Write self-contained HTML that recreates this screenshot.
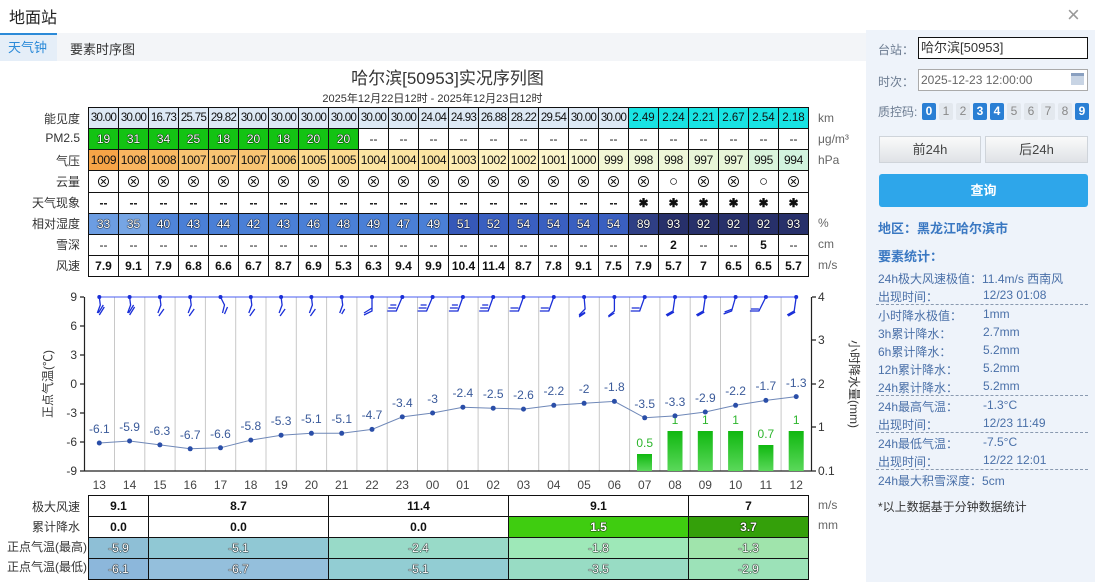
<!DOCTYPE html>
<html><head><meta charset="utf-8"><style>
*{margin:0;padding:0;box-sizing:border-box}
body{width:1095px;height:582px;background:#fff;font-family:"Liberation Sans","Noto Sans CJK SC",sans-serif;position:relative;overflow:hidden;color:#333}
.a{position:absolute;white-space:nowrap}
table{border-collapse:collapse;table-layout:fixed;position:absolute}
td{border:1.5px solid #111;text-align:center;font-size:12px;height:21px;padding:0;overflow:hidden;white-space:nowrap;color:#111}
.vis td{font-size:11.5px;letter-spacing:-0.7px}
.w{color:#fff;text-shadow:0 0 1px #000,0 0 1px #000,0 0 1px #000}
.lbl{position:absolute;right:1015px;font-size:12px;color:#333;text-align:right;white-space:nowrap}
.u{position:absolute;left:818px;font-size:12px;color:#666}
.rp{position:absolute;left:866px;top:30px;width:229px;height:552px;background:#eef3fa}
.st{position:absolute;left:878px;font-size:12px;color:#4a70a8;white-space:nowrap}
.st b{position:absolute;left:105px;top:0;font-weight:normal;white-space:nowrap}
.dash{position:absolute;left:876px;width:212px;border-top:1px dashed #8a9ab0}
.q{display:inline-block;width:14px;height:17px;line-height:17px;text-align:center;font-size:12px;margin-right:3px;border-radius:2px;background:#e3e8ee;color:#888}
.q.on{background:#2a7fd4;color:#fff;font-weight:bold}
.bt{position:absolute;top:136px;height:27px;border:1px solid #cfd4da;background:linear-gradient(#fafafa,#dfe2e6);font-size:13px;color:#444;text-align:center;line-height:25px}
</style></head><body>
<div class="a" style="left:9px;top:4px;font-size:16px;color:#222">地面站</div>
<div class="a" style="left:1067px;top:2px;font-size:22px;color:#999">×</div>
<div class="a" style="left:0;top:33px;width:866px;height:28px;background:#f3f5f8"></div>
<div class="a" style="left:0;top:33px;width:57px;height:28px;background:#e5eef8;border-top:2px solid #2b8ad8;color:#2b8ad8;font-size:13px;line-height:26px;padding-left:8px">天气钟</div>
<div class="a" style="left:70px;top:39px;font-size:13px;color:#333">要素时序图</div>

<div class="a" style="left:0;width:895px;top:64px;text-align:center;font-size:17px;color:#333">哈尔滨[50953]实况序列图</div>
<div class="a" style="left:0;width:865px;top:90px;text-align:center;font-size:11px;color:#333">2025年12月22日12时 - 2025年12月23日12时</div>

<div class="lbl" style="top:110px">能见度</div>
<div class="lbl" style="top:131px">PM2.5</div>
<div class="lbl" style="top:152px">气压</div>
<div class="lbl" style="top:173px">云量</div>
<div class="lbl" style="top:194px">天气现象</div>
<div class="lbl" style="top:215px">相对湿度</div>
<div class="lbl" style="top:236px">雪深</div>
<div class="lbl" style="top:257px">风速</div>
<div class="u" style="top:111px">km</div>
<div class="u" style="top:132px">μg/m³</div>
<div class="u" style="top:153px">hPa</div>
<div class="u" style="top:216px">%</div>
<div class="u" style="top:237px">cm</div>
<div class="u" style="top:258px">m/s</div>

<table style="left:88px;top:107px;width:720px">
<colgroup><col span="24" style="width:30px"></colgroup>
<tr class="vis" style="background:#dde9f5"><td>30.00</td><td>30.00</td><td>16.73</td><td>25.75</td><td>29.82</td><td>30.00</td><td>30.00</td><td>30.00</td><td>30.00</td><td>30.00</td><td>30.00</td><td>24.04</td><td>24.93</td><td>26.88</td><td>28.22</td><td>29.54</td><td>30.00</td><td>30.00</td><td style="background:#19e3e3;letter-spacing:0">2.49</td><td style="background:#19e3e3;letter-spacing:0">2.24</td><td style="background:#19e3e3;letter-spacing:0">2.21</td><td style="background:#19e3e3;letter-spacing:0">2.67</td><td style="background:#19e3e3;letter-spacing:0">2.54</td><td style="background:#19e3e3;letter-spacing:0">2.18</td></tr>
<tr><td class="w" style="background:#13c313">19</td><td class="w" style="background:#13c313">31</td><td class="w" style="background:#13c313">34</td><td class="w" style="background:#13c313">25</td><td class="w" style="background:#13c313">18</td><td class="w" style="background:#13c313">20</td><td class="w" style="background:#13c313">18</td><td class="w" style="background:#13c313">20</td><td class="w" style="background:#13c313">20</td><td>--</td><td>--</td><td>--</td><td>--</td><td>--</td><td>--</td><td>--</td><td>--</td><td>--</td><td>--</td><td>--</td><td>--</td><td>--</td><td>--</td><td>--</td></tr>
<tr style="letter-spacing:-0.3px"><td style="background:#f6a447">1009</td><td style="background:#f8b560">1008</td><td style="background:#f8b862">1008</td><td style="background:#f9c473">1007</td><td style="background:#f9c473">1007</td><td style="background:#f9c473">1007</td><td style="background:#fad080">1006</td><td style="background:#fbda90">1005</td><td style="background:#fbda90">1005</td><td style="background:#fce5a2">1004</td><td style="background:#fce5a2">1004</td><td style="background:#fce5a2">1004</td><td style="background:#fdecb2">1003</td><td style="background:#fdf2c0">1002</td><td style="background:#fdf2c0">1002</td><td style="background:#fbf6cc">1001</td><td style="background:#f7f7d2">1000</td><td style="background:#f2f7d5">999</td><td style="background:#eef7d8">998</td><td style="background:#eef7d8">998</td><td style="background:#e8f6d8">997</td><td style="background:#e8f6d8">997</td><td style="background:#d9f4dc">995</td><td style="background:#d2f3de">994</td></tr>
<tr style="font-size:15px"><td style="font-size:15px">⊗</td><td style="font-size:15px">⊗</td><td style="font-size:15px">⊗</td><td style="font-size:15px">⊗</td><td style="font-size:15px">⊗</td><td style="font-size:15px">⊗</td><td style="font-size:15px">⊗</td><td style="font-size:15px">⊗</td><td style="font-size:15px">⊗</td><td style="font-size:15px">⊗</td><td style="font-size:15px">⊗</td><td style="font-size:15px">⊗</td><td style="font-size:15px">⊗</td><td style="font-size:15px">⊗</td><td style="font-size:15px">⊗</td><td style="font-size:15px">⊗</td><td style="font-size:15px">⊗</td><td style="font-size:15px">⊗</td><td style="font-size:15px">⊗</td><td style="font-size:15px">○</td><td style="font-size:15px">⊗</td><td style="font-size:15px">⊗</td><td style="font-size:15px">○</td><td style="font-size:15px">⊗</td></tr>
<tr style="font-weight:bold"><td>--</td><td>--</td><td>--</td><td>--</td><td>--</td><td>--</td><td>--</td><td>--</td><td>--</td><td>--</td><td>--</td><td>--</td><td>--</td><td>--</td><td>--</td><td>--</td><td>--</td><td>--</td><td>✱</td><td>✱</td><td>✱</td><td>✱</td><td>✱</td><td>✱</td></tr>
<tr><td class="w" style="background:#6c9de2">33</td><td class="w" style="background:#76a5e4">35</td><td class="w" style="background:#4f84d8">40</td><td class="w" style="background:#4a7fd6">43</td><td class="w" style="background:#4a7fd6">44</td><td class="w" style="background:#4a7fd6">42</td><td class="w" style="background:#4a7fd6">43</td><td class="w" style="background:#4a7fd6">46</td><td class="w" style="background:#4a7fd6">48</td><td class="w" style="background:#4a7fd6">49</td><td class="w" style="background:#4a7fd6">47</td><td class="w" style="background:#4a7fd6">49</td><td class="w" style="background:#3658b8">51</td><td class="w" style="background:#3a5fc0">52</td><td class="w" style="background:#3a5fc0">54</td><td class="w" style="background:#3a5fc0">54</td><td class="w" style="background:#3a5fc0">54</td><td class="w" style="background:#3a5fc0">54</td><td class="w" style="background:#2f3f85">89</td><td class="w" style="background:#27306a">93</td><td class="w" style="background:#27306a">92</td><td class="w" style="background:#27306a">92</td><td class="w" style="background:#27306a">92</td><td class="w" style="background:#27306a">93</td></tr>
<tr><td>--</td><td>--</td><td>--</td><td>--</td><td>--</td><td>--</td><td>--</td><td>--</td><td>--</td><td>--</td><td>--</td><td>--</td><td>--</td><td>--</td><td>--</td><td>--</td><td>--</td><td>--</td><td>--</td><td><b>2</b></td><td>--</td><td>--</td><td><b>5</b></td><td>--</td></tr>
<tr style="font-weight:bold"><td>7.9</td><td>9.1</td><td>7.9</td><td>6.8</td><td>6.6</td><td>6.7</td><td>8.7</td><td>6.9</td><td>5.3</td><td>6.3</td><td>9.4</td><td>9.9</td><td>10.4</td><td>11.4</td><td>8.7</td><td>7.8</td><td>9.1</td><td>7.5</td><td>7.9</td><td>5.7</td><td>7</td><td>6.5</td><td>6.5</td><td>5.7</td></tr>
</table>

<svg class="a" style="left:0;top:0" width="866" height="582" font-family="Liberation Sans, Noto Sans CJK SC, sans-serif">
<g stroke="#c8c8c8" stroke-width="1">
<line x1="114.5" y1="297" x2="114.5" y2="471"/><line x1="144.8" y1="297" x2="144.8" y2="471"/><line x1="175.1" y1="297" x2="175.1" y2="471"/><line x1="205.4" y1="297" x2="205.4" y2="471"/><line x1="235.7" y1="297" x2="235.7" y2="471"/><line x1="266" y1="297" x2="266" y2="471"/><line x1="296.3" y1="297" x2="296.3" y2="471"/><line x1="326.6" y1="297" x2="326.6" y2="471"/><line x1="356.9" y1="297" x2="356.9" y2="471"/><line x1="387.2" y1="297" x2="387.2" y2="471"/><line x1="417.5" y1="297" x2="417.5" y2="471"/><line x1="447.8" y1="297" x2="447.8" y2="471"/><line x1="478.1" y1="297" x2="478.1" y2="471"/><line x1="508.4" y1="297" x2="508.4" y2="471"/><line x1="538.7" y1="297" x2="538.7" y2="471"/><line x1="569" y1="297" x2="569" y2="471"/><line x1="599.3" y1="297" x2="599.3" y2="471"/><line x1="629.6" y1="297" x2="629.6" y2="471"/><line x1="659.9" y1="297" x2="659.9" y2="471"/><line x1="690.2" y1="297" x2="690.2" y2="471"/><line x1="720.5" y1="297" x2="720.5" y2="471"/><line x1="750.8" y1="297" x2="750.8" y2="471"/><line x1="781.1" y1="297" x2="781.1" y2="471"/>
</g>
<g stroke="#222" stroke-width="1.2" fill="none">
<line x1="84.5" y1="297" x2="84.5" y2="471"/><line x1="84" y1="471" x2="812" y2="471"/><line x1="811.5" y1="297" x2="811.5" y2="471"/>
<path d="M80 297h4M80 326h4M80 355h4M80 384h4M80 413h4M80 442h4M80 471h4M812 297h4M812 340h4M812 384h4M812 427h4M812 471h4"/>
</g>
<g font-size="12" fill="#333" text-anchor="end">
<text x="77" y="301">9</text><text x="77" y="330">6</text><text x="77" y="359">3</text><text x="77" y="388">0</text><text x="77" y="417">-3</text><text x="77" y="446">-6</text><text x="77" y="475">-9</text>
</g>
<g font-size="12" fill="#333">
<text x="818" y="301">4</text><text x="818" y="344">3</text><text x="818" y="388">2</text><text x="818" y="431">1</text><text x="818" y="475">0.1</text>
</g>
<text transform="translate(52,384) rotate(-90)" font-size="12" fill="#333" text-anchor="middle">正点气温(℃)</text>
<text transform="translate(850,384) rotate(90)" font-size="12" fill="#333" text-anchor="middle">小时降水量(mm)</text>
<g font-size="12" fill="#444" text-anchor="middle">
<text x="99.3" y="489">13</text><text x="129.6" y="489">14</text><text x="159.9" y="489">15</text><text x="190.2" y="489">16</text><text x="220.5" y="489">17</text><text x="250.8" y="489">18</text><text x="281.1" y="489">19</text><text x="311.4" y="489">20</text><text x="341.7" y="489">21</text><text x="372" y="489">22</text><text x="402.3" y="489">23</text><text x="432.6" y="489">00</text><text x="462.9" y="489">01</text><text x="493.2" y="489">02</text><text x="523.5" y="489">03</text><text x="553.8" y="489">04</text><text x="584.1" y="489">05</text><text x="614.4" y="489">06</text><text x="644.7" y="489">07</text><text x="675" y="489">08</text><text x="705.3" y="489">09</text><text x="735.6" y="489">10</text><text x="765.9" y="489">11</text><text x="796.2" y="489">12</text>
</g>
<defs><linearGradient id="g" x1="0" y1="0" x2="0" y2="1"><stop offset="0" stop-color="#10b810"/><stop offset="1" stop-color="#5ad85a"/></linearGradient></defs>
<g fill="url(#g)">
<rect x="637" y="454" width="15" height="17"/><rect x="667.5" y="431" width="15" height="40"/><rect x="697.8" y="431" width="15" height="40"/><rect x="728.1" y="431" width="15" height="40"/><rect x="758.4" y="445" width="15" height="26"/><rect x="788.7" y="431" width="15" height="40"/>
</g>
<g font-size="12" fill="#2cb52c" text-anchor="middle">
<text x="644.7" y="447">0.5</text><text x="675" y="424">1</text><text x="705.3" y="424">1</text><text x="735.6" y="424">1</text><text x="765.9" y="438">0.7</text><text x="796.2" y="424">1</text>
</g>
<polyline fill="none" stroke="#6f88b8" stroke-width="1" points="99.3,443 129.6,441 159.9,444.9 190.2,448.8 220.5,447.8 250.8,440.1 281.1,435.2 311.4,433.3 341.7,433.3 372,429.4 402.3,416.9 432.6,413 462.9,407.2 493.2,408.2 523.5,409.1 553.8,405.3 584.1,403.3 614.4,401.4 644.7,417.8 675,415.9 705.3,412 735.6,405.3 765.9,400.4 796.2,396.6"/>
<g fill="#2a4ea8">
<circle cx="99.3" cy="443" r="2.5"/><circle cx="129.6" cy="441" r="2.5"/><circle cx="159.9" cy="444.9" r="2.5"/><circle cx="190.2" cy="448.8" r="2.5"/><circle cx="220.5" cy="447.8" r="2.5"/><circle cx="250.8" cy="440.1" r="2.5"/><circle cx="281.1" cy="435.2" r="2.5"/><circle cx="311.4" cy="433.3" r="2.5"/><circle cx="341.7" cy="433.3" r="2.5"/><circle cx="372" cy="429.4" r="2.5"/><circle cx="402.3" cy="416.9" r="2.5"/><circle cx="432.6" cy="413" r="2.5"/><circle cx="462.9" cy="407.2" r="2.5"/><circle cx="493.2" cy="408.2" r="2.5"/><circle cx="523.5" cy="409.1" r="2.5"/><circle cx="553.8" cy="405.3" r="2.5"/><circle cx="584.1" cy="403.3" r="2.5"/><circle cx="614.4" cy="401.4" r="2.5"/><circle cx="644.7" cy="417.8" r="2.5"/><circle cx="675" cy="415.9" r="2.5"/><circle cx="705.3" cy="412" r="2.5"/><circle cx="735.6" cy="405.3" r="2.5"/><circle cx="765.9" cy="400.4" r="2.5"/><circle cx="796.2" cy="396.6" r="2.5"/>
</g>
<g font-size="12" fill="#3a5a9a" text-anchor="middle">
<text x="99.3" y="433">-6.1</text><text x="129.6" y="431">-5.9</text><text x="159.9" y="435">-6.3</text><text x="190.2" y="439">-6.7</text><text x="220.5" y="438">-6.6</text><text x="250.8" y="430">-5.8</text><text x="281.1" y="425">-5.3</text><text x="311.4" y="423">-5.1</text><text x="341.7" y="423">-5.1</text><text x="372" y="419">-4.7</text><text x="402.3" y="407">-3.4</text><text x="432.6" y="403">-3</text><text x="462.9" y="397">-2.4</text><text x="493.2" y="398">-2.5</text><text x="523.5" y="399">-2.6</text><text x="553.8" y="395">-2.2</text><text x="584.1" y="393">-2</text><text x="614.4" y="391">-1.8</text><text x="644.7" y="408">-3.5</text><text x="675" y="406">-3.3</text><text x="705.3" y="402">-2.9</text><text x="735.6" y="395">-2.2</text><text x="765.9" y="390">-1.7</text><text x="796.2" y="387">-1.3</text>
</g>
<line x1="99" y1="297" x2="797" y2="297" stroke="#4a5cf0" stroke-width="1"/>
<g stroke="#1a2fd8" stroke-width="1.3" fill="none">
<path d="M99.3 297l1 8l-3 8m6-8l-5 8m6-6l-5 8"/>
<path d="M129.6 297l1 8l-3 8m6-8l-5 8m6-6l-5 8"/>
<path d="M159.9 297l1 8l-3 8m6-4l-5 7"/>
<path d="M190.2 297l1 8l-3 8m6-4l-5 7"/>
<path d="M220.5 297l4 8l-2 8m5-6l-3 7"/>
<path d="M250.8 297l1 8l-3 8m6-4l-5 7"/>
<path d="M281.1 297l1 8l-3 8m6-4l-5 7"/>
<path d="M311.4 297l1 8l-3 8m6-4l-5 7"/>
<path d="M341.7 297l1 8l-3 8m5-4l-3 5"/>
<path d="M372 297l0 14l-8 4m8-7l-8 5"/>
<path d="M402.3 297l-6 14h-9m9-3h-8m8-3h-6"/>
<path d="M432.6 297l-6 14h-9m9-3h-8m8-3h-6"/>
<path d="M462.9 297l-5 14h-9m9-3h-8m8-3h-6"/>
<path d="M493.2 297l-5 14h-9m9-3h-8m8-3h-6"/>
<path d="M523.5 297l-5 14h-9m9-3h-8"/>
<path d="M553.8 297l-5 14h-9m9-3h-8"/>
<path d="M584.1 297l1 12l-6 6m6-3l-6 4m6-3l-6 4"/>
<path d="M614.4 297l0 14l-6 5m6-3l-6 4"/>
<path d="M644.7 297l-5 14h-9m9-3h-8"/>
<path d="M675 297l-2 14l-7 4m8-3l-7 4"/>
<path d="M705.3 297l-2 14l-7 4m8-3l-7 4"/>
<path d="M735.6 297l-4 14l-8 3m9-5l-8 3"/>
<path d="M765.9 297l-7 14h-9m9-2h-8"/>
<path d="M796.2 297l-2 14l-7 4m8-3l-7 4"/>
</g>
<g fill="#1a2fd8">
<circle cx="99.3" cy="297" r="2"/><circle cx="129.6" cy="297" r="2"/><circle cx="159.9" cy="297" r="2"/><circle cx="190.2" cy="297" r="2"/><circle cx="220.5" cy="297" r="2"/><circle cx="250.8" cy="297" r="2"/><circle cx="281.1" cy="297" r="2"/><circle cx="311.4" cy="297" r="2"/><circle cx="341.7" cy="297" r="2"/><circle cx="372" cy="297" r="2"/><circle cx="402.3" cy="297" r="2"/><circle cx="432.6" cy="297" r="2"/><circle cx="462.9" cy="297" r="2"/><circle cx="493.2" cy="297" r="2"/><circle cx="523.5" cy="297" r="2"/><circle cx="553.8" cy="297" r="2"/><circle cx="584.1" cy="297" r="2"/><circle cx="614.4" cy="297" r="2"/><circle cx="644.7" cy="297" r="2"/><circle cx="675" cy="297" r="2"/><circle cx="705.3" cy="297" r="2"/><circle cx="735.6" cy="297" r="2"/><circle cx="765.9" cy="297" r="2"/><circle cx="796.2" cy="297" r="2"/>
</g>
</svg>

<div class="lbl" style="top:498px">极大风速</div>
<div class="lbl" style="top:518px">累计降水</div>
<div class="lbl" style="top:538px;right:1008px">正点气温(最高)</div>
<div class="lbl" style="top:558px;right:1008px">正点气温(最低)</div>
<div class="u" style="top:498px">m/s</div>
<div class="u" style="top:518px">mm</div>
<table style="left:88px;top:495px;width:720px">
<colgroup><col style="width:60px"><col style="width:180px"><col style="width:180px"><col style="width:180px"><col style="width:120px"></colgroup>
<tr style="font-weight:bold"><td style="height:20px">9.1</td><td>8.7</td><td>11.4</td><td>9.1</td><td>7</td></tr>
<tr style="font-weight:bold"><td style="height:20px">0.0</td><td>0.0</td><td>0.0</td><td class="w" style="background:#3fcd10">1.5</td><td class="w" style="background:#34a00a">3.7</td></tr>
<tr><td class="w" style="height:20px;background:#8ebfd6">-5.9</td><td class="w" style="background:#90c8d4">-5.1</td><td class="w" style="background:#98dac8">-2.4</td><td class="w" style="background:#9ee8b8">-1.8</td><td class="w" style="background:#a0e4ac">-1.3</td></tr>
<tr><td class="w" style="height:20px;background:#8cb7db">-6.1</td><td class="w" style="background:#94bfdc">-6.7</td><td class="w" style="background:#92cdd3">-5.1</td><td class="w" style="background:#98dcc4">-3.5</td><td class="w" style="background:#9ce2b8">-2.9</td></tr>
</table>

<div class="rp"></div>
<div class="a" style="left:878px;top:41px;font-size:12px;color:#6b7b90">台站：</div>
<div class="a" style="left:918px;top:37px;width:170px;height:22px;background:#fff;border:1px solid #111;font-size:13px;line-height:20px;padding-left:2px;color:#333">哈尔滨[50953]</div>
<div class="a" style="left:878px;top:73px;font-size:12px;color:#6b7b90">时次：</div>
<div class="a" style="left:918px;top:69px;width:170px;height:22px;background:#fff;border:1px solid #aaa;font-size:12px;line-height:20px;padding-left:2px;color:#666">2025-12-23 12:00:00</div>
<div class="a" style="left:1071px;top:73px;width:13px;height:12px;background:#c8d4e4;border-top:3px solid #8aa0c0"></div>
<div class="a" style="left:878px;top:103px;font-size:12px;color:#6b7b90">质控码:</div>
<div class="a" style="left:922px;top:102px"><span class="q on">0</span><span class="q">1</span><span class="q">2</span><span class="q on">3</span><span class="q on">4</span><span class="q">5</span><span class="q">6</span><span class="q">7</span><span class="q">8</span><span class="q on">9</span></div>
<div class="bt" style="left:879px;width:102px">前24h</div>
<div class="bt" style="left:985px;width:103px">后24h</div>
<div class="a" style="left:879px;top:174px;width:209px;height:33px;background:#2ea6ea;border-radius:3px;color:#fff;font-weight:bold;font-size:13px;text-align:center;line-height:33px">查询</div>
<div class="a" style="left:878px;top:218px;font-size:13px;font-weight:bold;color:#3a78c2">地区：黑龙江哈尔滨市</div>
<div class="a" style="left:878px;top:246px;font-size:13px;font-weight:bold;color:#3a78c2">要素统计：</div>
<div class="st" style="top:270px">24h极大风速极值：11.4m/s 西南风</div>
<div class="st" style="top:288px">出现时间：<b>12/23 01:08</b></div>
<div class="dash" style="top:304px"></div>
<div class="st" style="top:307px">小时降水极值：<b>1mm</b></div>
<div class="st" style="top:325px">3h累计降水：<b>2.7mm</b></div>
<div class="st" style="top:343px">6h累计降水：<b>5.2mm</b></div>
<div class="st" style="top:361px">12h累计降水：<b>5.2mm</b></div>
<div class="st" style="top:379px">24h累计降水：<b>5.2mm</b></div>
<div class="dash" style="top:395px"></div>
<div class="st" style="top:398px">24h最高气温：<b>-1.3°C</b></div>
<div class="st" style="top:416px">出现时间：<b>12/23 11:49</b></div>
<div class="dash" style="top:432px"></div>
<div class="st" style="top:435px">24h最低气温：<b>-7.5°C</b></div>
<div class="st" style="top:453px">出现时间：<b>12/22 12:01</b></div>
<div class="dash" style="top:469px"></div>
<div class="st" style="top:472px">24h最大积雪深度：5cm</div>
<div class="a" style="left:878px;top:498px;font-size:12px;color:#333">*以上数据基于分钟数据统计</div>
</body></html>
